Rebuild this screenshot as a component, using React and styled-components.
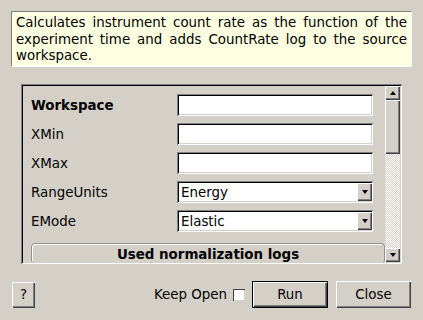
import React from "react";
import styled, { createGlobalStyle } from "styled-components";

const GlobalStyle = createGlobalStyle`
  html, body { margin: 0; padding: 0; background: #d4d0c8; }
  body { font-family: "DejaVu Sans", "Liberation Sans", sans-serif; font-size: 13.4px; color: #000; }
  * { box-sizing: border-box; }
`;

const sunken = `
  box-shadow: inset 1px 1px #808080, inset -1px -1px #ffffff, inset 2px 2px #000000, inset -2px -2px #d4d0c8;
`;
const raised = `
  box-shadow: inset 1px 1px #ffffff, inset -1px -1px #404040, inset -2px -2px #808080;
`;

const Window = styled.div`
  width: 423px;
  height: 320px;
  padding: 11px 11px 0 11px;
  display: flex;
  flex-direction: column;
  overflow: hidden;
`;

const Description = styled.div`
  width: 401px;
  height: 56px;
  background: #ffffe1;
  border-top: 1px solid #808080;
  border-left: 1px solid #808080;
  border-right: 1px solid #ffffff;
  border-bottom: 1px solid #ffffff;
  padding: 3px 4px 0 4px;
  line-height: 16.5px;
  text-align: justify;
`;

const ScrollFrame = styled.div`
  margin: 17px 0 0 10px;
  width: 381px;
  height: 180px;
  padding: 2px;
  display: flex;
  ${sunken}
`;

const Content = styled.div`
  flex: 1;
  overflow: hidden;
  padding: 8px 0 0 8px;
  display: flex;
  flex-direction: column;
`;

const Rows = styled.div`
  display: flex;
  flex-direction: column;
  gap: 7px;
`;

const Row = styled.div`
  display: grid;
  grid-template-columns: 146px 196px;
  align-items: center;
  height: 22px;
`;

const Label = styled.span`
  font-weight: ${(p) => (p.$bold ? "bold" : "normal")};
  white-space: nowrap;
`;

const TextInput = styled.div`
  height: 22px;
  background: #fff;
  ${sunken}
`;

const Combo = styled.div`
  height: 22px;
  background: #fff;
  padding: 2px 1px 2px 2px;
  display: flex;
  align-items: center;
  ${sunken}
`;

const ComboText = styled.span`
  flex: 1;
  padding-left: 2px;
`;

const ArrowButton = styled.div`
  width: ${(p) => p.$w}px;
  height: ${(p) => p.$h}px;
  background: #d4d0c8;
  display: flex;
  align-items: center;
  justify-content: center;
  flex-shrink: 0;
  ${raised}
`;

const Triangle = styled.div`
  width: 0;
  height: 0;
  border-left: 3.5px solid transparent;
  border-right: 3.5px solid transparent;
  ${(p) => (p.$up ? "border-bottom: 4px solid #000;" : "border-top: 4px solid #000;")}
`;

const GroupBox = styled.div`
  margin-top: 11px;
  width: 354px;
  height: 80px;
  border: 1px solid #909090;
  border-radius: 4px;
  box-shadow: inset 1px 1px #ffffff;
  padding-top: 3px;
  text-align: center;
  font-weight: bold;
  line-height: 16px;
`;

const ScrollBar = styled.div`
  width: 15px;
  display: flex;
  flex-direction: column;
`;

const Handle = styled.div`
  height: 54px;
  background: #d4d0c8;
  ${raised}
`;

const Trough = styled.div`
  flex: 1;
  background: repeating-conic-gradient(#ffffff 0 25%, #d4d0c8 0 50%) 0 0 / 2px 2px;
`;

const BottomBar = styled.div`
  margin-top: 17px;
  display: flex;
  align-items: center;
  padding-right: 1px;
`;

const Button = styled.button`
  font: inherit;
  color: #000;
  width: ${(p) => p.$w}px;
  height: ${(p) => p.$h || 27}px;
  margin-left: ${(p) => p.$ml || 0}px;
  background: #d4d0c8;
  border: ${(p) => (p.$default ? "1px solid #000" : "none")};
  padding: 0;
  display: flex;
  align-items: center;
  justify-content: center;
  ${raised}
`;

const Spacer = styled.div`
  flex: 1;
`;

const KeepOpen = styled.label`
  display: flex;
  align-items: center;
  gap: 6px;
`;

const CheckBox = styled.span`
  width: 12px;
  height: 12px;
  background: #fff;
  box-shadow: inset 1px 1px #404040, inset -1px -1px #d4d0c8;
`;

export default function App() {
  return (
    <Window>
      <GlobalStyle />
      <Description>
        Calculates instrument count rate as the function of the experiment time and adds CountRate log to the source workspace.
      </Description>
      <ScrollFrame>
        <Content>
          <Rows>
            <Row>
              <Label $bold>Workspace</Label>
              <TextInput />
            </Row>
            <Row>
              <Label>XMin</Label>
              <TextInput />
            </Row>
            <Row>
              <Label>XMax</Label>
              <TextInput />
            </Row>
            <Row>
              <Label>RangeUnits</Label>
              <Combo>
                <ComboText>Energy</ComboText>
                <ArrowButton $w={15} $h={18}><Triangle /></ArrowButton>
              </Combo>
            </Row>
            <Row>
              <Label>EMode</Label>
              <Combo>
                <ComboText>Elastic</ComboText>
                <ArrowButton $w={15} $h={18}><Triangle /></ArrowButton>
              </Combo>
            </Row>
          </Rows>
          <GroupBox>Used normalization logs</GroupBox>
        </Content>
        <ScrollBar>
          <ArrowButton $w={15} $h={14}><Triangle $up /></ArrowButton>
          <Handle />
          <Trough />
          <ArrowButton $w={15} $h={14}><Triangle /></ArrowButton>
        </ScrollBar>
      </ScrollFrame>
      <BottomBar>
        <Button $w={23} $h={26} $ml={1}>?</Button>
        <Spacer />
        <KeepOpen>
          Keep Open
          <CheckBox />
        </KeepOpen>
        <Button $w={76} $ml={7} $default>Run</Button>
        <Button $w={75} $ml={8}>Close</Button>
      </BottomBar>
    </Window>
  );
}
